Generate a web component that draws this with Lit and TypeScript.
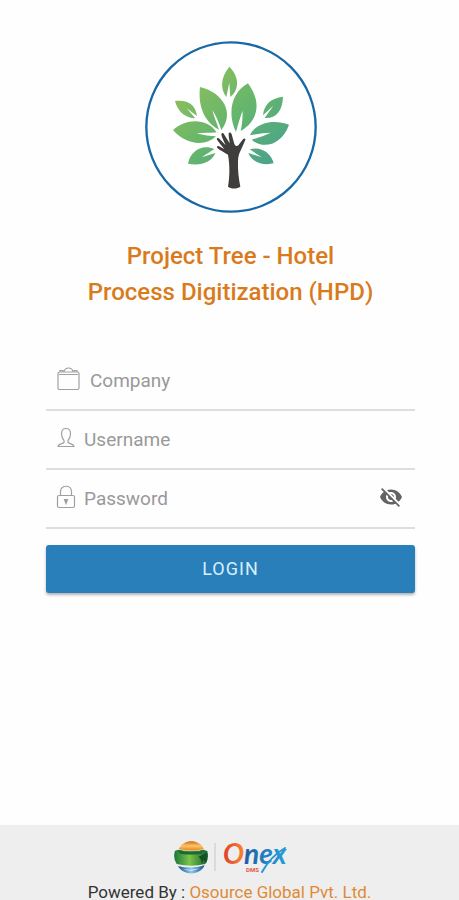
import { LitElement, html, svg, css } from "lit";
import { customElement, state } from "lit/decorators.js";

@customElement("tree-logo")
class TreeLogo extends LitElement {
  static styles = css`
    :host { display: block; width: 172px; height: 172px; }
    .art { display: block; width: 100%; height: 100%; }
  `;

  render() {
    const leaves = [
      "M266 90C240 122 238 156 257 181L266 138L269 181C298 158 295 118 266 90Z",
      "M178 151C172 200 186 254 235 279C228 258 220 240 215 220C228 240 236 262 242 280C282 232 250 168 178 151Z",
      "M322 140C274 166 258 228 286 286C292 264 298 242 306 222C306 246 304 264 300 283C350 254 366 200 322 140Z",
      "M103 193C112 226 134 244 164 245L138 215L169 238C166 206 142 188 103 193Z",
      "M427 180C392 184 370 202 367 236L398 207L372 244C406 246 426 222 427 180Z",
      "M97 280C136 244 200 244 228 287C208 290 188 288 168 290C190 296 208 298 226 299C192 332 132 322 97 280Z",
      "M445 264C398 246 344 258 328 296C350 292 370 288 390 288C368 298 350 304 333 309C368 340 424 324 445 264Z",
      "M142 381C150 342 184 322 221 337L183 362L224 349C212 378 180 388 142 381Z",
      "M399 380C392 350 362 328 327 338L363 362L323 349C334 376 366 388 399 380Z",
    ];
    return html`
      <svg class="art" viewBox="13 13 516 516" role="img" aria-label="Project Tree">
        <defs>
          <linearGradient id="leaf" gradientUnits="userSpaceOnUse" x1="180" y1="110" x2="400" y2="370">
            <stop offset="0" stop-color="#8abf5c" />
            <stop offset="0.5" stop-color="#64b56d" />
            <stop offset="1" stop-color="#4ba38b" />
          </linearGradient>
        </defs>
        <circle cx="271" cy="271" r="254" fill="#fff" stroke="#1768a6" stroke-width="7" />
        <g fill="url(#leaf)">${leaves.map((d) => svg`<path d=${d} />`)}</g>
        <path
          fill="#403d3d"
          d="M262 450C268 416 267 382 262 354C252 348 240 342 230 334C227 329 231 327 235 329L251 337C245 328 236 320 229 309C227 303 233 302 237 307L255 326C250 314 244 304 242 294C242 288 248 287 251 294L267 320C267 310 263 300 264 291C265 286 271 287 273 293L281 322C286 331 292 329 296 322L307 308C311 303 317 306 313 312L301 339C295 350 292 360 292 374C291 400 294 426 299 450C290 457 270 457 262 450Z"
        />
      </svg>
    `;
  }
}

@customElement("onex-brand")
class OnexBrand extends LitElement {
  static styles = css`
    :host { display: flex; align-items: center; justify-content: center; gap: 6px; }
    .globe { width: 34px; height: 34px; }
    .rule { width: 2px; height: 28px; background: #dadada; }
    .word { width: 64px; height: 36px; overflow: visible; }
    .name { font: italic 700 28px "Lato", sans-serif; }
    .sub { font: 700 6px "Roboto", sans-serif; fill: #e2574c; }
  `;

  render() {
    return html`
      <svg class="globe" viewBox="0 0 102 102" aria-hidden="true">
        <defs>
          <linearGradient id="gold" x1="0" y1="0" x2="0" y2="1">
            <stop offset="0" stop-color="#d9641e" /><stop offset="0.5" stop-color="#fbc765" /><stop offset="1" stop-color="#e98120" />
          </linearGradient>
          <linearGradient id="green" x1="0" y1="0" x2="1" y2="0">
            <stop offset="0" stop-color="#18763b" /><stop offset="0.45" stop-color="#7cc447" /><stop offset="1" stop-color="#125f30" />
          </linearGradient>
          <linearGradient id="blue" x1="0" y1="0" x2="1" y2="0">
            <stop offset="0" stop-color="#174f89" /><stop offset="0.5" stop-color="#8bc8ec" /><stop offset="1" stop-color="#174f89" />
          </linearGradient>
        </defs>
        <path d="M14 27C30-4 74-4 90 27Q52 36 14 27Z" fill="url(#gold)" />
        <path d="M3 32Q18 26 30 32H76Q88 26 100 34Q106 58 94 72Q52 82 8 72Q-4 54 3 32Z" fill="url(#green)" />
        <path d="M10 31Q52 38 92 31L84 41Q50 46 18 41Z" fill="#1d6a35" />
        <path d="M74 50L98 38V68L88 60L84 72L80 58Z" fill="#125028" />
        <path d="M12 78Q52 88 92 76C78 108 28 108 12 78Z" fill="url(#blue)" />
        <path d="M28 86Q52 93 76 85Q52 99 28 86Z" fill="#d8effa" />
      </svg>
      <span class="rule"></span>
      <svg class="word" viewBox="0 0 64 36" role="img" aria-label="Onex DMS">
        <defs>
          <linearGradient id="flame" x1="0" y1="0" x2="1" y2="0">
            <stop offset="0" stop-color="#e23a2c" /><stop offset="1" stop-color="#f58a2c" />
          </linearGradient>
          <linearGradient id="sea" x1="0" y1="0" x2="1" y2="0">
            <stop offset="0" stop-color="#1d5ca6" /><stop offset="1" stop-color="#29a0d8" />
          </linearGradient>
        </defs>
        <text class="name" x="1" y="25" fill="url(#flame)">O</text>
        <text class="name" x="22" y="25" fill="url(#sea)">nex</text>
        <path d="M63 9Q49 17 40 33" fill="none" stroke="#2498d4" stroke-width="2" stroke-linecap="round" />
        <text class="sub" x="24" y="33">DMS</text>
      </svg>
    `;
  }
}

@customElement("app-root")
class AppRoot extends LitElement {
  @state() private revealed = false;

  static styles = css`
    :host {
      display: flex;
      flex-direction: column;
      height: 100vh;
      overflow: hidden;
      background: #fefefe;
      font-family: "Roboto", sans-serif;
    }
    .page {
      flex: 1;
      display: flex;
      flex-direction: column;
      align-items: center;
      padding: 41px 44px 0 46px;
    }
    .title {
      margin: 25px 0 42px;
      color: #d97b1c;
      font-size: 24px;
      font-weight: 500;
      line-height: 36px;
      text-align: center;
    }
    .line { display: block; }
    .form { align-self: stretch; display: flex; flex-direction: column; }
    .field {
      display: flex;
      align-items: center;
      gap: 8px;
      height: 57px;
      padding: 0 12px 0 10px;
      border-bottom: 2px solid #dedede;
    }
    .glyph {
      flex: none;
      height: 24px;
      padding-bottom: 4px;
      fill: none;
      stroke: #a0a0a0;
      stroke-width: 1.2;
    }
    .wide { width: 26px; }
    .slim { width: 20px; }
    .input {
      flex: 1;
      min-width: 0;
      padding: 0;
      border: 0;
      outline: 0;
      background: none;
      color: #444;
      font: 400 19px/24px "Roboto", sans-serif;
    }
    .input::placeholder { color: #999; opacity: 1; }
    .peek {
      display: flex;
      padding: 0 0 4px;
      border: 0;
      background: none;
      cursor: pointer;
    }
    .eye { width: 24px; height: 24px; fill: #636363; }
    .login {
      height: 48px;
      margin-top: 16px;
      border: 0;
      border-radius: 3px;
      background: #287fb9;
      box-shadow: 0 2px 3px rgba(0, 0, 0, 0.3);
      color: #d9eefb;
      font: 400 18px/24px "Roboto", sans-serif;
      letter-spacing: 1px;
      cursor: pointer;
    }
    .footer {
      flex: none;
      height: 75px;
      box-sizing: border-box;
      padding-top: 14px;
      background: #eee;
    }
    .credit {
      margin: 7px 0 0;
      color: #333;
      font-size: 17px;
      line-height: 20px;
      text-align: center;
      white-space: nowrap;
    }
    .link { color: #e08a34; text-decoration: none; }
  `;

  render() {
    return html`
      <main class="page">
        <tree-logo></tree-logo>
        <h1 class="title">
          <span class="line">Project Tree - Hotel</span>
          <span class="line">Process Digitization (HPD)</span>
        </h1>
        <form class="form" @submit=${(e: Event) => e.preventDefault()}>
          <label class="field">
            <svg class="glyph wide" viewBox="0 0 26 24" aria-hidden="true">
              <rect x="2" y="5" width="21" height="17.500" rx="1.500" />
              <path d="M3 7.500H22M4 5V3.500H7V5M18 5V3.500H21V5M8 4.500Q9 1 12.500 1T17 4.500" />
            </svg>
            <input class="input" type="text" placeholder="Company" aria-label="Company" />
          </label>
          <label class="field">
            <svg class="glyph slim" viewBox="0 0 20 24" aria-hidden="true">
              <path d="M8 14.500C6 12.500 5.500 10 5.500 7.500C5.500 4 7.500 2.500 10 2.500S14.500 4 14.500 7.500C14.500 10 14 12.500 12 14.500V16.500C13 17.500 17.500 17.500 18 20.500H2C2.500 17.500 7 17.500 8 16.500Z" />
            </svg>
            <input class="input" type="text" placeholder="Username" aria-label="Username" />
          </label>
          <div class="field">
            <svg class="glyph slim" viewBox="0 0 20 24" aria-hidden="true">
              <rect x="1.500" y="10.500" width="17" height="12" rx="1.500" />
              <path d="M4.500 10.500V6.500C4.500 -0.500 15.500 -0.500 15.500 6.500V10.500" />
              <path d="M8.500 14.500H11.500L10 18.500Z" fill="#999" />
            </svg>
            <input
              class="input"
              type=${this.revealed ? "text" : "password"}
              placeholder="Password"
              aria-label="Password"
            />
            <button
              class="peek"
              type="button"
              aria-label="Show password"
              @click=${() => (this.revealed = !this.revealed)}
            >
              <svg class="eye" viewBox="0 0 24 24" aria-hidden="true">
                <path
                  d="M12 7c2.760 0 5 2.240 5 5 0 .65-.13 1.260-.36 1.830l2.920 2.920c1.510-1.260 2.700-2.890 3.430-4.750-1.730-4.390-6-7.500-11-7.500-1.400 0-2.740.25-3.980.7l2.160 2.160C10.740 7.130 11.350 7 12 7zM2 4.270l2.280 2.280.46.46C3.080 8.300 1.780 10.020 1 12c1.730 4.390 6 7.500 11 7.500 1.550 0 3.030-.3 4.380-.84l.42.42L19.730 22 21 20.730 3.270 3 2 4.270zM7.530 9.800l1.550 1.550c-.05.21-.08.43-.08.65 0 1.660 1.340 3 3 3 .22 0 .44-.03.65-.08l1.550 1.550c-.67.33-1.410.53-2.200.53-2.760 0-5-2.240-5-5 0-.79.2-1.530.53-2.200zm4.310-.78l3.150 3.150.02-.16c0-1.660-1.340-3-3-3l-.17.01z"
                />
              </svg>
            </button>
          </div>
          <button class="login" type="submit">LOGIN</button>
        </form>
      </main>
      <footer class="footer">
        <onex-brand></onex-brand>
        <p class="credit">Powered By : <a class="link" href="#">Osource Global Pvt. Ltd.</a></p>
      </footer>
    `;
  }
}
